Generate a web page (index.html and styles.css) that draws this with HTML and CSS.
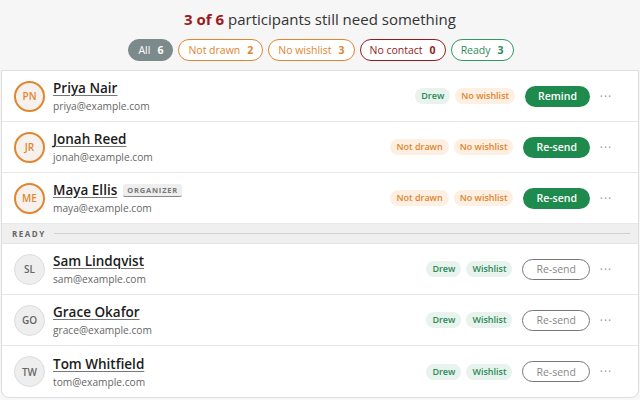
FILE: index.html
```html
<!DOCTYPE html>
<html lang="en">
<head>
<meta charset="utf-8">
<link rel="stylesheet" href="styles.css">
</head>
<body>
<div class="page">
  <header class="summary">
    <h1 class="title"><strong>3 of 6</strong> participants still need something</h1>
    <div class="filters">
      <span class="chip chip-all">All <b>6</b></span>
      <span class="chip chip-orange">Not drawn <b>2</b></span>
      <span class="chip chip-orange">No wishlist <b>3</b></span>
      <span class="chip chip-red">No contact <b>0</b></span>
      <span class="chip chip-green">Ready <b>3</b></span>
    </div>
  </header>
  <section class="card">
    <div class="row">
      <div class="avatar avatar-warn">PN</div>
      <div class="who"><a class="name">Priya Nair</a><div class="email">priya@example.com</div></div>
      <div class="tags"><span class="tag tag-ok">Drew</span><span class="tag tag-warn">No wishlist</span></div>
      <button class="btn btn-fill">Remind</button>
      <span class="more">···</span>
    </div>
    <div class="row">
      <div class="avatar avatar-warn">JR</div>
      <div class="who"><a class="name">Jonah Reed</a><div class="email">jonah@example.com</div></div>
      <div class="tags"><span class="tag tag-warn">Not drawn</span><span class="tag tag-warn">No wishlist</span></div>
      <button class="btn btn-fill">Re-send</button>
      <span class="more">···</span>
    </div>
    <div class="row">
      <div class="avatar avatar-warn">ME</div>
      <div class="who"><div class="nameline"><a class="name">Maya Ellis</a><span class="role">ORGANIZER</span></div><div class="email">maya@example.com</div></div>
      <div class="tags"><span class="tag tag-warn">Not drawn</span><span class="tag tag-warn">No wishlist</span></div>
      <button class="btn btn-fill">Re-send</button>
      <span class="more">···</span>
    </div>
    <div class="divider"><span>READY</span></div>
    <div class="row">
      <div class="avatar">SL</div>
      <div class="who"><a class="name">Sam Lindqvist</a><div class="email">sam@example.com</div></div>
      <div class="tags"><span class="tag tag-ok">Drew</span><span class="tag tag-ok">Wishlist</span></div>
      <button class="btn btn-line">Re-send</button>
      <span class="more">···</span>
    </div>
    <div class="row">
      <div class="avatar">GO</div>
      <div class="who"><a class="name">Grace Okafor</a><div class="email">grace@example.com</div></div>
      <div class="tags"><span class="tag tag-ok">Drew</span><span class="tag tag-ok">Wishlist</span></div>
      <button class="btn btn-line">Re-send</button>
      <span class="more">···</span>
    </div>
    <div class="row">
      <div class="avatar">TW</div>
      <div class="who"><a class="name">Tom Whitfield</a><div class="email">tom@example.com</div></div>
      <div class="tags"><span class="tag tag-ok">Drew</span><span class="tag tag-ok">Wishlist</span></div>
      <button class="btn btn-line">Re-send</button>
      <span class="more">···</span>
    </div>
  </section>
</div>
</body>
</html>
```
FILE: styles.css
```css
* { box-sizing: border-box; }
html, body { margin: 0; padding: 0; }
body {
  background: #f6f6f6;
  font-family: "Open Sans", "DejaVu Sans", sans-serif;
  color: #222;
  width: 640px;
  height: 400px;
  overflow: hidden;
}
.page { padding: 0 1px; }
.summary {
  height: 70px;
  padding-top: 9px;
  display: flex;
  flex-direction: column;
  align-items: center;
}
.title {
  margin: 0;
  font-size: 15px;
  font-weight: 400;
  color: #333;
  line-height: 20px;
}
.title strong { color: #9b1b1b; font-weight: 700; }
.filters {
  display: flex;
  gap: 5px;
  margin-top: 10px;
  margin-left: 2px;
}
.chip {
  height: 22px;
  padding: 0 9px;
  border-radius: 11px;
  border: 1.5px solid;
  font-size: 10.5px;
  font-weight: 500;
  display: flex;
  align-items: center;
  background: #fff;
}
.chip b { font-weight: 700; margin-left: 7px; }
.chip-all { background: #7d8a8b; border-color: #7d8a8b; color: #fff; }
.chip-orange { border-color: #e0862f; color: #e0862f; }
.chip-red { border-color: #951c1c; color: #951c1c; }
.chip-green { border-color: #2f9a62; color: #2e8b57; }

.card {
  background: #fff;
  border: 1px solid #dedede;
  border-radius: 0 0 8px 8px;
  overflow: hidden;
}
.row {
  height: 51px;
  display: flex;
  align-items: center;
  padding: 0 21px 0 12px;
  border-bottom: 1px solid #e8e8e8;
}
.row:last-child { border-bottom: 0; }
.avatar {
  width: 31px;
  height: 31px;
  border-radius: 50%;
  background: #eeeeee;
  border: 1.5px solid #dcdcdc;
  color: #666;
  font-size: 10px;
  font-weight: 600;
  display: flex;
  align-items: center;
  justify-content: center;
  flex: none;
}
.avatar-warn { border: 2px solid #e0862f; color: #e0862f; background: #f6f1ec; }
.who { margin-left: 8px; flex: 1; display: flex; flex-direction: column; }
.nameline { display: flex; align-items: center; gap: 6px; }
.name {
  font-size: 13.5px;
  font-weight: 600;
  color: #1c1c1c;
  text-decoration: underline;
  text-decoration-color: #777;
  text-underline-offset: 2px;
  line-height: 18px;
}
.role {
  font-size: 7.5px;
  font-weight: 700;
  letter-spacing: 0.8px;
  color: #777;
  background: #eeeeee;
  border-bottom: 1.5px solid #888;
  padding: 1px 4px;
  border-radius: 2px;
}
.email { font-size: 10.2px; color: #666; margin-top: 2px; line-height: 14px; }
.tags { display: flex; gap: 5px; }
.tag {
  font-size: 9px;
  font-weight: 600;
  height: 16px;
  line-height: 16px;
  padding: 0 6px;
  border-radius: 8px;
}
.tag-ok { background: #e7f3ec; color: #2b8a57; }
.tag-warn { background: #fdefe2; color: #e0862f; }
.btn {
  margin-left: 10px;
  height: 21px;
  border-radius: 11px;
  font-family: inherit;
  font-size: 10.5px;
  font-weight: 600;
  padding: 0 13px;
}
.btn-fill { background: #1f8a4d; border: 0; color: #fff; }
.btn-line { background: #fff; border: 1.5px solid #777; color: #888; font-weight: 500; }
.more {
  width: 22px;
  margin-left: 5px;
  text-align: center;
  color: #999;
  font-size: 12px;
  letter-spacing: 1px;
}
.divider {
  height: 20px;
  background: #efefef;
  display: flex;
  align-items: center;
  padding: 0 8px 0 10px;
  border-bottom: 1px solid #e4e4e4;
}
.divider span {
  font-size: 8px;
  font-weight: 700;
  letter-spacing: 1.5px;
  color: #666;
}
.divider::after {
  content: "";
  flex: 1;
  height: 1px;
  background: #cfcfcf;
  margin-left: 8px;
}
```
